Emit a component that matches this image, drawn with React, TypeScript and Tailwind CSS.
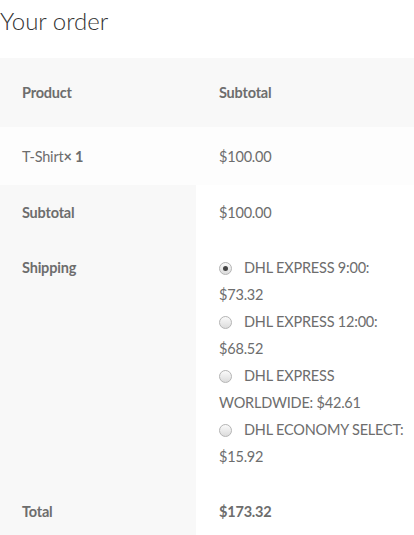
const rates = [
  { id: "dhl-9", label: "DHL EXPRESS 9:00:", price: "$73.32", checked: true },
  { id: "dhl-12", label: "DHL EXPRESS 12:00:", price: "$68.52", checked: false },
  { id: "dhl-ww", label: "DHL EXPRESS WORLDWIDE:", price: "$42.61", checked: false },
  { id: "dhl-eco", label: "DHL ECONOMY SELECT:", price: "$15.92", checked: false },
];

function Radio({ checked }: { checked: boolean }) {
  return (
    <span className="relative top-[1px] mr-[12px] inline-block h-[13px] w-[13px] rounded-full border border-[#b5b5b5] bg-gradient-to-b from-[#fafafa] to-[#dcdcdc] align-[-1px]">
      {checked && (
        <span className="absolute left-[3px] top-[3px] h-[5px] w-[5px] rounded-full bg-[#444]" />
      )}
    </span>
  );
}

export default function App() {
  return (
    <div className="w-[414px] bg-white font-['Lato',sans-serif] text-[14.5px] leading-[27px] tracking-[-0.2px] text-[#6d6d6d]">
      <h3 className="h-[58px] pt-[3px] text-[24px] font-light leading-[36px] tracking-normal text-[#333]">
        Your order
      </h3>
      <table className="w-full border-collapse text-left">
        <thead>
          <tr className="h-[69px] bg-[#f8f8f8]">
            <th className="w-[196px] px-[22px] font-bold">Product</th>
            <th className="pl-[23px] pr-[22px] font-bold">Subtotal</th>
          </tr>
        </thead>
        <tbody>
          <tr className="h-[58px] bg-[#fdfdfd]">
            <td className="px-[22px]">
              T-Shirt<strong className="font-bold">× 1</strong>
            </td>
            <td className="pl-[23px] pr-[22px]">$100.00</td>
          </tr>
        </tbody>
        <tfoot>
          <tr>
            <th className="bg-[#f8f8f8] px-[22px] pb-[16px] pt-[14px] align-top font-bold">Subtotal</th>
            <td className="pb-[16px] pl-[23px] pr-[22px] pt-[14px]">$100.00</td>
          </tr>
          <tr>
            <th className="bg-[#f8f8f8] px-[22px] pt-[12px] align-top font-bold">Shipping</th>
            <td className="pb-[14px] pl-[23px] pr-[4px] pt-[12px]">
              <ul>
                {rates.map((r) => (
                  <li key={r.id}>
                    <Radio checked={r.checked} />
                    {r.label} {r.price}
                  </li>
                ))}
              </ul>
            </td>
          </tr>
          <tr>
            <th className="bg-[#f8f8f8] px-[22px] py-[14px] font-bold">Total</th>
            <td className="pl-[23px] pr-[22px] py-[14px] font-bold">$173.32</td>
          </tr>
        </tfoot>
      </table>
    </div>
  );
}
